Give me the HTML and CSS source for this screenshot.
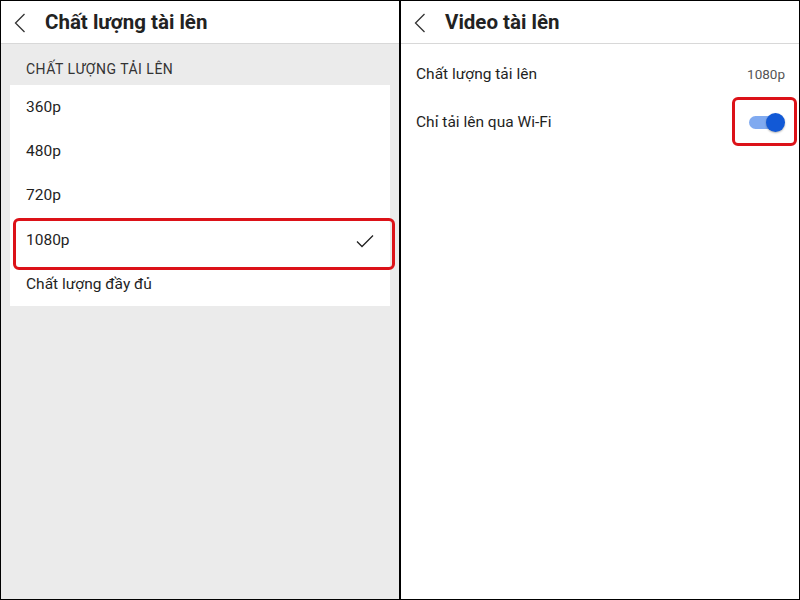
FILE: index.html
```html
<!DOCTYPE html>
<html lang="vi">
<head>
<meta charset="utf-8">
<title>Chất lượng tải lên</title>
<link rel="stylesheet" href="styles.css">
</head>
<body>
<div class="frame">
  <section class="panel panel-left">
    <header class="bar">
      <svg class="back" width="12" height="20" viewBox="0 0 12 20"><path d="M10.5 1 L1.5 10 L10.5 19" fill="none" stroke="#333" stroke-width="1.3"/></svg>
      <h1 class="title">Chất lượng tài lên</h1>
    </header>
    <div class="section-label">CHẤT LƯỢNG TẢI LÊN</div>
    <ul class="card">
      <li class="row">360p</li>
      <li class="row">480p</li>
      <li class="row">720p</li>
      <li class="row selected">1080p
        <svg class="check" width="18" height="14" viewBox="0 0 18 14"><path d="M1 7.5 L6 12.5 L17 1.5" fill="none" stroke="#222" stroke-width="1.3"/></svg>
        <span class="mark mark-row"></span>
      </li>
      <li class="row">Chất lượng đầy đủ</li>
    </ul>
  </section>
  <div class="divider"></div>
  <section class="panel panel-right">
    <header class="bar">
      <svg class="back" width="12" height="20" viewBox="0 0 12 20"><path d="M10.5 1 L1.5 10 L10.5 19" fill="none" stroke="#333" stroke-width="1.3"/></svg>
      <h1 class="title">Video tài lên</h1>
    </header>
    <div class="setting">
      <span>Chất lượng tải lên</span>
      <span class="value">1080p</span>
    </div>
    <div class="setting setting-toggle">
      <span>Chỉ tải lên qua Wi-Fi</span>
      <span class="toggle">
        <span class="track"></span>
        <span class="knob"></span>
      </span>
      <span class="mark mark-toggle"></span>
    </div>
  </section>
</div>
</body>
</html>
```
FILE: styles.css
```css
* { box-sizing: border-box; }
html, body { margin: 0; padding: 0; }
body {
  font-family: Roboto, "Noto Sans", "Liberation Sans", sans-serif;
  color: #1f1f1f;
  background: #fff;
}
.frame {
  width: 800px;
  height: 600px;
  border: 1px solid #000;
  display: flex;
}
.panel {
  width: 398px;
  display: flex;
  flex-direction: column;
}
.panel-left { background: #ebebeb; }
.panel-right { background: #fff; flex: 1; }
.divider { width: 2px; background: #000; }
.bar {
  height: 43px;
  background: #fff;
  border-bottom: 1px solid #d8d8d8;
  display: flex;
  align-items: center;
  padding-left: 13px;
  flex-shrink: 0;
}
.back { display: block; margin-top: 1px; }
.title {
  margin: 0 0 0 19px;
  font-size: 20.5px;
  font-weight: 700;
  color: #222;
}
.section-label {
  font-size: 14px;
  color: #333;
  padding: 17px 0 0 25px;
  height: 41px;
  letter-spacing: 0.5px;
}
.card {
  list-style: none;
  margin: 0 0 0 9px;
  padding: 0;
  width: 380px;
  background: #fff;
}
.row {
  height: 44.2px;
  display: flex;
  align-items: center;
  padding-left: 16px;
  font-size: 15.5px;
  position: relative;
}
.check { position: absolute; left: 346px; top: 16px; }
.mark {
  position: absolute;
  border: 3px solid #dc1218;
  border-radius: 6px;
}
.mark-row { left: 3px; right: -5px; top: 0; height: 52px; }
.setting {
  display: flex;
  justify-content: space-between;
  align-items: center;
  height: 48px;
  padding: 0 14px 0 15px;
  font-size: 15.5px;
  position: relative;
}
.setting:first-of-type { margin-top: 6px; }
.value { font-size: 13.5px; color: #555; }
.toggle {
  position: relative;
  width: 37px;
  height: 22px;
  display: block;
  margin-right: -1px;
}
.track {
  position: absolute;
  left: 0; top: 5px;
  width: 30px; height: 13px;
  border-radius: 7px;
  background: #80aaf0;
}
.knob {
  position: absolute;
  left: 17px; top: 2px;
  width: 19px; height: 19px;
  border-radius: 50%;
  background: #1259d6;
  box-shadow: 0 1px 2px rgba(0,0,0,0.3);
}
.mark-toggle { right: 2px; top: -1px; width: 65px; height: 49px; }
```
